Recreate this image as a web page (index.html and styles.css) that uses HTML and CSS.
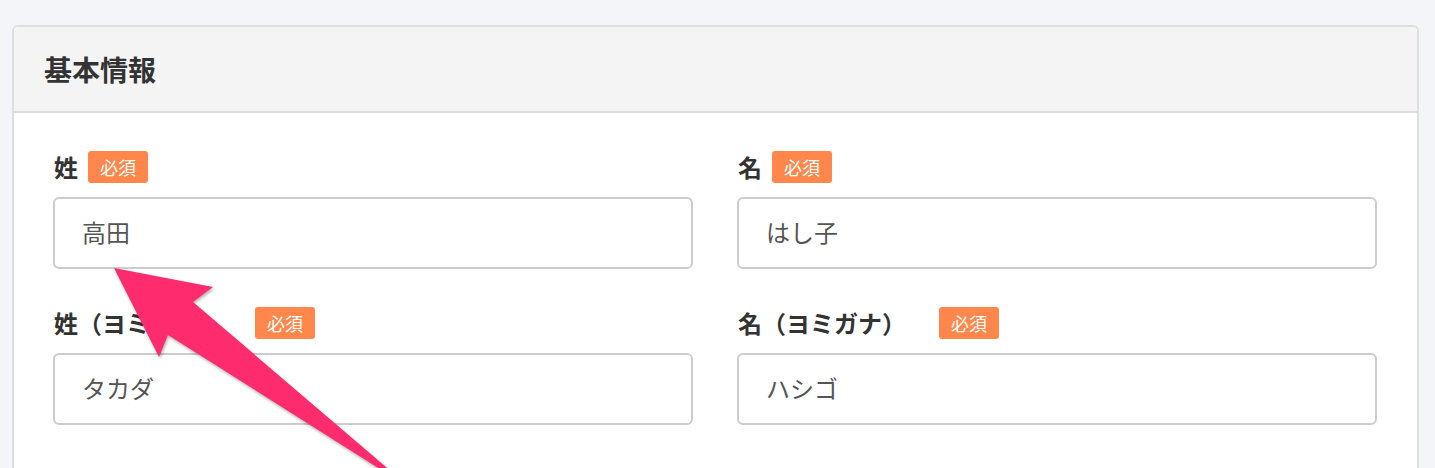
FILE: index.html
```html
<!DOCTYPE html>
<html lang="ja">
<head>
<meta charset="utf-8">
<title>基本情報</title>
<link rel="stylesheet" href="styles.css">
</head>
<body>
<section class="card">
  <header class="card-header">
    <h2 class="card-title">基本情報</h2>
  </header>
  <div class="card-body">
    <div class="form-grid">
      <div class="field">
        <label class="field-label"><span class="label-text">姓</span><span class="badge">必須</span></label>
        <input class="field-input" type="text" value="高田">
      </div>
      <div class="field">
        <label class="field-label"><span class="label-text">名</span><span class="badge">必須</span></label>
        <input class="field-input" type="text" value="はし子">
      </div>
      <div class="field">
        <label class="field-label"><span class="label-text">姓（ヨミガナ）</span><span class="badge badge-far">必須</span></label>
        <input class="field-input" type="text" value="タカダ">
      </div>
      <div class="field">
        <label class="field-label"><span class="label-text">名（ヨミガナ）</span><span class="badge badge-far">必須</span></label>
        <input class="field-input" type="text" value="ハシゴ">
      </div>
    </div>
  </div>
</section>
<svg class="arrow" width="1435" height="468" viewBox="0 0 1435 468" aria-hidden="true">
  <polygon points="114,268 213,287 193,302 413,490 168,335 159,357" />
</svg>
</body>
</html>
```
FILE: styles.css
```css
html, body {
  margin: 0;
  padding: 0;
}
body {
  background: #f4f5f9;
  font-family: "Noto Sans CJK JP", "Noto Sans", sans-serif;
  width: 1435px;
  height: 468px;
  overflow: hidden;
  position: relative;
  text-spacing-trim: space-all;
}
.card {
  margin: 25px 0 0 12px;
  width: 1403px;
  border: 2px solid #dedede;
  border-radius: 6px 6px 0 0;
  background: #ffffff;
  height: 600px;
}
.card-header {
  height: 84px;
  background: #f4f4f4;
  border-bottom: 2px solid #dddddd;
  border-radius: 5px 5px 0 0;
  display: flex;
  align-items: center;
  padding-left: 30px;
}
.card-title {
  margin: 0;
  font-size: 28px;
  font-weight: 700;
  color: #333333;
  line-height: 1;
}
.card-body {
  padding: 38px 40px 0 39px;
}
.form-grid {
  display: grid;
  grid-template-columns: 640px 640px;
  column-gap: 44px;
  row-gap: 38px;
}
.field {
  display: flex;
  flex-direction: column;
  gap: 14px;
}
.field-label {
  display: flex;
  align-items: center;
  height: 32px;
  padding-left: 1px;
}
.label-text {
  font-size: 24px;
  font-weight: 700;
  color: #333333;
  line-height: 1;
  text-spacing-trim: space-all;
}
.badge {
  margin-left: 10px;
  height: 32px;
  padding: 0 12px;
  background: #ff874c;
  color: #ffffff;
  font-size: 18px;
  border-radius: 3px;
  display: inline-flex;
  align-items: center;
  line-height: 1;
}
.badge-far {
  margin-left: 33px;
}
.field-input {
  box-sizing: border-box;
  width: 640px;
  height: 72px;
  border: 2px solid #cccccc;
  border-radius: 6px;
  padding: 0 0 4px 27px;
  font-family: "Noto Sans CJK JP", "Noto Sans", sans-serif;
  font-size: 24px;
  color: #555555;
  background: #ffffff;
  outline: none;
  margin: 0;
}
.arrow {
  position: absolute;
  left: 0;
  top: 0;
  pointer-events: none;
  overflow: visible;
}
.arrow polygon {
  fill: #fe2c6e;
  filter: drop-shadow(1px 2px 1.5px rgba(0, 0, 0, 0.3));
}
```
